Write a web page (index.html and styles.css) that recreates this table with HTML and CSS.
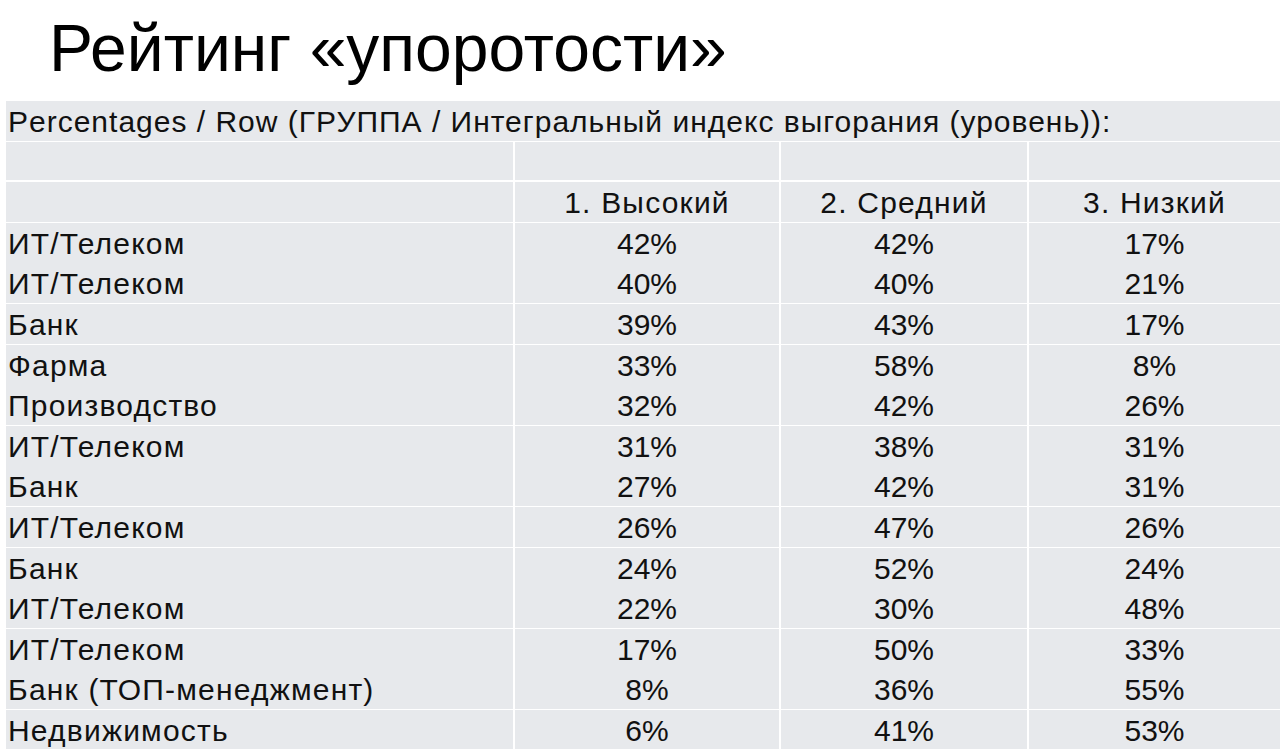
FILE: index.html
```html
<!DOCTYPE html>
<html lang="ru">
<head>
<meta charset="utf-8">
<title>Рейтинг «упоротости»</title>
<link rel="stylesheet" href="styles.css">
</head>
<body>
<h1 class="title">Рейтинг «упоротости»</h1>
<div class="grid">
  <div class="row caption-row"><div class="caption">Percentages / Row (ГРУППА / Интегральный индекс выгорания (уровень)):</div></div>
  <div class="row"><div></div><div></div><div></div><div></div></div>
  <div class="row head"><div></div><div class="num">1. Высокий</div><div class="num">2. Средний</div><div class="num">3. Низкий</div></div>
  <div class="row"><div class="lbl">ИТ/Телеком</div><div class="num">42%</div><div class="num">42%</div><div class="num">17%</div></div>
  <div class="row"><div class="lbl">ИТ/Телеком</div><div class="num">40%</div><div class="num">40%</div><div class="num">21%</div></div>
  <div class="row"><div class="lbl">Банк</div><div class="num">39%</div><div class="num">43%</div><div class="num">17%</div></div>
  <div class="row"><div class="lbl">Фарма</div><div class="num">33%</div><div class="num">58%</div><div class="num">8%</div></div>
  <div class="row"><div class="lbl">Производство</div><div class="num">32%</div><div class="num">42%</div><div class="num">26%</div></div>
  <div class="row"><div class="lbl">ИТ/Телеком</div><div class="num">31%</div><div class="num">38%</div><div class="num">31%</div></div>
  <div class="row"><div class="lbl">Банк</div><div class="num">27%</div><div class="num">42%</div><div class="num">31%</div></div>
  <div class="row"><div class="lbl">ИТ/Телеком</div><div class="num">26%</div><div class="num">47%</div><div class="num">26%</div></div>
  <div class="row"><div class="lbl">Банк</div><div class="num">24%</div><div class="num">52%</div><div class="num">24%</div></div>
  <div class="row"><div class="lbl">ИТ/Телеком</div><div class="num">22%</div><div class="num">30%</div><div class="num">48%</div></div>
  <div class="row"><div class="lbl">ИТ/Телеком</div><div class="num">17%</div><div class="num">50%</div><div class="num">33%</div></div>
  <div class="row"><div class="lbl">Банк (ТОП-менеджмент)</div><div class="num">8%</div><div class="num">36%</div><div class="num">55%</div></div>
  <div class="row"><div class="lbl">Недвижимость</div><div class="num">6%</div><div class="num">41%</div><div class="num">53%</div></div>
</div>
</body>
</html>
```
FILE: styles.css
```css
html, body {
  margin: 0;
  padding: 0;
  background: #ffffff;
  overflow: hidden;
}
body {
  width: 1280px;
  height: 749px;
  font-family: "Liberation Sans", Arial, sans-serif;
  color: #111111;
}
.title {
  margin: 0;
  height: 101px;
  padding-left: 49px;
  box-sizing: border-box;
  font-family: "Liberation Sans", Arial, sans-serif;
  font-weight: normal;
  font-size: 66px;
  line-height: 96px;
  color: #000000;
}
.grid {
  margin-left: 6px;
  width: 1274px;
  display: grid;
  grid-auto-rows: 38.6px;
  row-gap: 2px;
  background: #ffffff;
}
.row {
  display: grid;
  grid-template-columns: 507px 264px 246px 251px;
  column-gap: 2px;
  background: #ffffff;
}
.row > div {
  background: #e7e9ec;
  font-size: 30px;
  line-height: 38px;
  padding-top: 2px;
  white-space: nowrap;
}
.caption-row {
  grid-template-columns: 1fr;
}
.caption {
  padding-left: 2px;
  letter-spacing: 1px;
}
.lbl {
  padding-left: 2px;
  letter-spacing: 1.2px;
}
.num {
  text-align: center;
}
.head .num {
  letter-spacing: 1.2px;
}
```
